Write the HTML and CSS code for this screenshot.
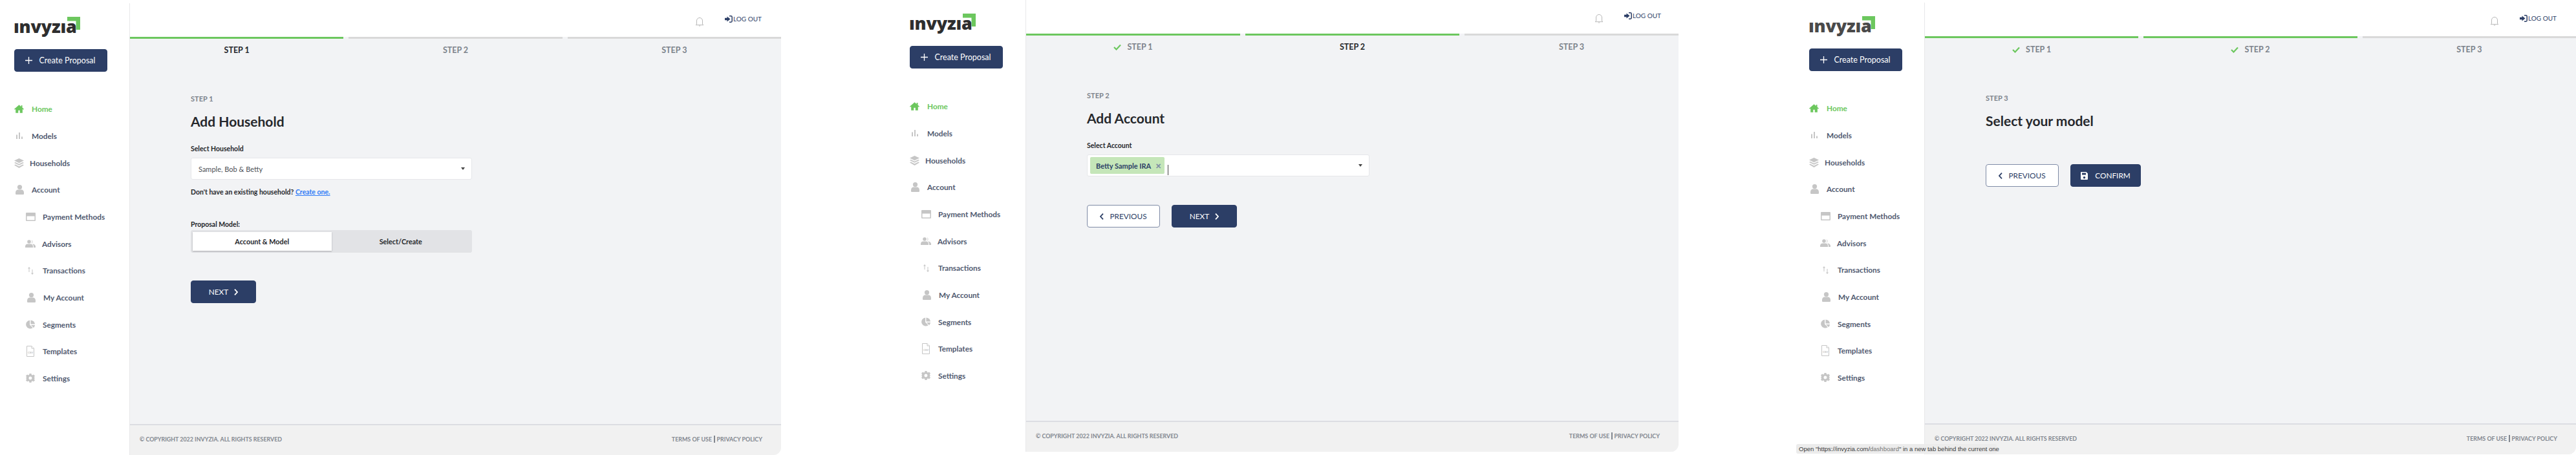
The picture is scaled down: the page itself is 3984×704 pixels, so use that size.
FILE: index.html
```html
<!DOCTYPE html>
<html lang="en">
<head>
<meta charset="utf-8">
<title>Invyzia - Create Proposal</title>
<link rel="stylesheet" href="styles.css">
</head>
<body>
<svg class="sprite" aria-hidden="true">
  <symbol id="i-home" viewBox="0 0 24 20"><path d="M12 0 0 10.2l1.5 1.7L3.500 10.200V20h6.500v-6.500h4V20h6.500v-9.800l2 1.700 1.500-1.700-4-3.400V1h-3v3.200z"/></symbol>
  <symbol id="i-bars" viewBox="0 0 10 10"><rect x="0" y="3.500" width="2" height="6.500"/><rect x="4" y="0" width="2" height="10"/><rect x="8" y="6.500" width="2" height="3.500"/></symbol>
  <symbol id="i-layers" viewBox="0 0 15 15"><path d="M7.500 0 15 3.600 7.500 7.200 0 3.600z"/><path d="M1.800 6 0 6.900l7.500 3.900L15 6.900 13.200 6 7.500 8.800z"/><path d="M1.800 9.600 0 10.500 7.500 15 15 10.500l-1.800-.9-5.700 2.900z"/></symbol>
  <symbol id="i-user" viewBox="0 0 13 15"><circle cx="6.500" cy="3.600" r="3.600"/><path d="M0 12c0-3 2-4.500 3.500-4.500h6C11 7.500 13 9 13 12v1.500c0 1-.6 1.500-1.500 1.500h-10C.6 15 0 14.500 0 13.500z"/></symbol>
  <symbol id="i-card" viewBox="0 0 15 13"><path fill-rule="evenodd" d="M1 0h13a1 1 0 0 1 1 1v11a1 1 0 0 1-1 1H1a1 1 0 0 1-1-1V1a1 1 0 0 1 1-1zm.5 5.500v6h12v-6z"/></symbol>
  <symbol id="i-users" viewBox="0 0 16 12"><circle cx="6" cy="3" r="2.800"/><path d="M0 10.500C0 8 1.700 6.500 3.500 6.500h5C10.300 6.500 12 8 12 10.500V12H0z"/><path d="M9.500.3a2.800 2.800 0 0 1 0 5.400 4 4 0 0 0 0-5.400zM11 6.500c2.500 0 5 1.500 5 4V12h-3v-1.500c0-1.500-.7-3-2-4z"/></symbol>
  <symbol id="i-arrows" viewBox="0 0 9 12"><path d="M2 0 0 2.500h1.500V8h1V2.500H4zM7 12l2-2.500H7.500V4h-1v5.500H5z"/></symbol>
  <symbol id="i-pie" viewBox="0 0 15 14"><path d="M6.500 0v7.500l5 5A7 7 0 1 1 6.500 0z"/><path d="M8 0a7 7 0 0 1 7 6.500H8z"/><path d="M8.500 8H15a7 7 0 0 1-2 4.500z"/></symbol>
  <symbol id="i-gear" viewBox="0 0 14 14"><path fill-rule="evenodd" d="M5.500 0h3l.4 1.900 1.300.6L11.900 1.500 14 3.600l-1.100 1.700.5 1.200L14 7v0l-.6.5-.5 1.200 1.100 1.700-2.100 2.100-1.700-1-1.300.6L8.500 14h-3l-.4-1.900-1.300-.6-1.700 1L0 10.400l1.100-1.700-.5-1.200L0 7v0l.6-.5.5-1.200L0 3.600l2.100-2.100 1.700 1 1.300-.6zM7 4.500a2.500 2.500 0 1 0 0 5 2.500 2.500 0 0 0 0-5z"/></symbol>
  <symbol id="i-bell" viewBox="0 0 14 15"><path fill="none" stroke="currentColor" stroke-width="1" d="M2.500 11.500V6a4.500 4.500 0 0 1 9 0v5.500l1.500 1.200H1z"/><path d="M5.500 13.500h3L7 15z"/></symbol>
  <symbol id="i-logout" viewBox="0 0 12 11"><path d="M0 3.800h3.500V1.500L8.500 5.500l-5 4V7.200H0z"/><path fill="none" stroke="currentColor" stroke-width="1.500" d="M7 .8h2.500c1 0 1.700.7 1.700 1.700v6c0 1-.7 1.700-1.700 1.700H7"/></symbol>
  <symbol id="i-check" viewBox="0 0 12 10"><path fill="none" stroke="currentColor" stroke-width="2.200" d="m1 5 3.500 3.500L11 1.500"/></symbol>
  <symbol id="i-save" viewBox="0 0 11 12"><path fill-rule="evenodd" d="M1 0h7.500L11 2.500V11a1 1 0 0 1-1 1H1a1 1 0 0 1-1-1V1a1 1 0 0 1 1-1zm1 1.500v3h6v-3zM5.500 7a1.800 1.800 0 1 0 0 3.600 1.800 1.800 0 0 0 0-3.600z"/></symbol>
  <symbol id="i-plus" viewBox="0 0 11 11"><path fill="none" stroke="currentColor" stroke-width="1.300" d="M5.500 0v11M0 5.500h11"/></symbol>
  <symbol id="i-next" viewBox="0 0 6 10"><path fill="none" stroke="currentColor" stroke-width="1.800" d="m1 .6 4 4.400-4 4.400"/></symbol>
  <symbol id="i-prev" viewBox="0 0 6 10"><path fill="none" stroke="currentColor" stroke-width="1.800" d="M5 .6 1 5l4 4.400"/></symbol>
  <symbol id="i-corner" viewBox="0 0 20 20"><path d="M0 0h20v20h-6.500V6.500H0z"/></symbol>
</svg>

<div class="frame frame-one">
  <aside class="sidebar">
    <div class="logo" aria-label="invyzia">ınvyzıa<svg class="logo-corner"><use href="#i-corner"/></svg></div>
    <a class="btn btn-primary btn-create"><svg class="ic-plus"><use href="#i-plus"/></svg>Create Proposal</a>
    <nav class="nav">
      <a class="nav-item is-active"><svg class="ic ic-home"><use href="#i-home"/></svg>Home</a>
      <a class="nav-item"><svg class="ic ic-bars"><use href="#i-bars"/></svg>Models</a>
      <a class="nav-item nav-wide"><svg class="ic ic-layers"><use href="#i-layers"/></svg>Households</a>
      <a class="nav-item"><svg class="ic ic-user"><use href="#i-user"/></svg>Account</a>
      <a class="nav-item nav-sub"><svg class="ic ic-card"><use href="#i-card"/></svg>Payment Methods</a>
      <a class="nav-item nav-sub"><svg class="ic ic-users"><use href="#i-users"/></svg>Advisors</a>
      <a class="nav-item nav-sub"><svg class="ic ic-arrows"><use href="#i-arrows"/></svg>Transactions</a>
      <a class="nav-item nav-sub"><svg class="ic ic-user"><use href="#i-user"/></svg>My Account</a>
      <a class="nav-item nav-sub"><svg class="ic ic-pie"><use href="#i-pie"/></svg>Segments</a>
      <a class="nav-item nav-sub"><svg class="ic ic-csv" viewBox="0 0 12 17"><path class="csv-page" d="M.5.500h7.500l3.500 3.500v12.500H.5z"/><path class="csv-page" d="M8 .5V4h3.500"/><text class="csv-text" x="6" y="12">CSV</text></svg>Templates</a>
      <a class="nav-item nav-sub"><svg class="ic ic-gear"><use href="#i-gear"/></svg>Settings</a>
    </nav>
  </aside>
  <main class="main">
    <header class="topbar">
      <svg class="ic-bell"><use href="#i-bell"/></svg>
      <a class="logout"><svg class="ic-logout"><use href="#i-logout"/></svg>LOG OUT</a>
    </header>
    <div class="stepper">
      <div class="step is-done is-current">STEP 1</div>
      <div class="step">STEP 2</div>
      <div class="step">STEP 3</div>
    </div>
    <section class="body">
      <div class="eyebrow">STEP 1</div>
      <h1 class="title">Add Household</h1>
      <label class="field-label">Select Household</label>
      <div class="select"><span class="select-value">Sample, Bob &amp; Betty</span><span class="select-arrow"></span></div>
      <p class="helper">Don't have an existing household? <a class="link">Create one.</a></p>
      <label class="field-label model-label">Proposal Model:</label>
      <div class="toggle">
        <span class="toggle-opt is-on">Account &amp; Model</span>
        <span class="toggle-opt">Select/Create</span>
      </div>
      <div class="actions actions-one">
        <a class="btn btn-primary btn-next">NEXT<svg class="ic-chev"><use href="#i-next"/></svg></a>
      </div>
    </section>
    <footer class="footer">
      <span>© COPYRIGHT 2022 INVYZIA. ALL RIGHTS RESERVED</span>
      <span class="footer-links"><a>TERMS OF USE</a><i class="footer-sep"></i><a>PRIVACY POLICY</a></span>
    </footer>
  </main>
</div>

<div class="frame frame-two">
  <aside class="sidebar">
    <div class="logo" aria-label="invyzia">ınvyzıa<svg class="logo-corner"><use href="#i-corner"/></svg></div>
    <a class="btn btn-primary btn-create"><svg class="ic-plus"><use href="#i-plus"/></svg>Create Proposal</a>
    <nav class="nav">
      <a class="nav-item is-active"><svg class="ic ic-home"><use href="#i-home"/></svg>Home</a>
      <a class="nav-item"><svg class="ic ic-bars"><use href="#i-bars"/></svg>Models</a>
      <a class="nav-item nav-wide"><svg class="ic ic-layers"><use href="#i-layers"/></svg>Households</a>
      <a class="nav-item"><svg class="ic ic-user"><use href="#i-user"/></svg>Account</a>
      <a class="nav-item nav-sub"><svg class="ic ic-card"><use href="#i-card"/></svg>Payment Methods</a>
      <a class="nav-item nav-sub"><svg class="ic ic-users"><use href="#i-users"/></svg>Advisors</a>
      <a class="nav-item nav-sub"><svg class="ic ic-arrows"><use href="#i-arrows"/></svg>Transactions</a>
      <a class="nav-item nav-sub"><svg class="ic ic-user"><use href="#i-user"/></svg>My Account</a>
      <a class="nav-item nav-sub"><svg class="ic ic-pie"><use href="#i-pie"/></svg>Segments</a>
      <a class="nav-item nav-sub"><svg class="ic ic-csv" viewBox="0 0 12 17"><path class="csv-page" d="M.5.500h7.500l3.500 3.500v12.500H.5z"/><path class="csv-page" d="M8 .5V4h3.500"/><text class="csv-text" x="6" y="12">CSV</text></svg>Templates</a>
      <a class="nav-item nav-sub"><svg class="ic ic-gear"><use href="#i-gear"/></svg>Settings</a>
    </nav>
  </aside>
  <main class="main">
    <header class="topbar">
      <svg class="ic-bell"><use href="#i-bell"/></svg>
      <a class="logout"><svg class="ic-logout"><use href="#i-logout"/></svg>LOG OUT</a>
    </header>
    <div class="stepper">
      <div class="step is-done"><svg class="ic-check"><use href="#i-check"/></svg>STEP 1</div>
      <div class="step is-done is-current">STEP 2</div>
      <div class="step">STEP 3</div>
    </div>
    <section class="body">
      <div class="eyebrow">STEP 2</div>
      <h1 class="title">Add Account</h1>
      <label class="field-label">Select Account</label>
      <div class="select select-multi">
        <span class="chip">Betty Sample IRA<span class="chip-x">×</span></span>
        <span class="caret"></span>
        <span class="select-arrow"></span>
      </div>
      <div class="actions">
        <a class="btn btn-outline btn-prev"><svg class="ic-chev"><use href="#i-prev"/></svg>PREVIOUS</a>
        <a class="btn btn-primary btn-next">NEXT<svg class="ic-chev"><use href="#i-next"/></svg></a>
      </div>
    </section>
    <footer class="footer">
      <span>© COPYRIGHT 2022 INVYZIA. ALL RIGHTS RESERVED</span>
      <span class="footer-links"><a>TERMS OF USE</a><i class="footer-sep"></i><a>PRIVACY POLICY</a></span>
    </footer>
  </main>
</div>

<div class="frame frame-three">
  <aside class="sidebar">
    <div class="logo" aria-label="invyzia">ınvyzıa<svg class="logo-corner"><use href="#i-corner"/></svg></div>
    <a class="btn btn-primary btn-create"><svg class="ic-plus"><use href="#i-plus"/></svg>Create Proposal</a>
    <nav class="nav">
      <a class="nav-item is-active"><svg class="ic ic-home"><use href="#i-home"/></svg>Home</a>
      <a class="nav-item"><svg class="ic ic-bars"><use href="#i-bars"/></svg>Models</a>
      <a class="nav-item nav-wide"><svg class="ic ic-layers"><use href="#i-layers"/></svg>Households</a>
      <a class="nav-item"><svg class="ic ic-user"><use href="#i-user"/></svg>Account</a>
      <a class="nav-item nav-sub"><svg class="ic ic-card"><use href="#i-card"/></svg>Payment Methods</a>
      <a class="nav-item nav-sub"><svg class="ic ic-users"><use href="#i-users"/></svg>Advisors</a>
      <a class="nav-item nav-sub"><svg class="ic ic-arrows"><use href="#i-arrows"/></svg>Transactions</a>
      <a class="nav-item nav-sub"><svg class="ic ic-user"><use href="#i-user"/></svg>My Account</a>
      <a class="nav-item nav-sub"><svg class="ic ic-pie"><use href="#i-pie"/></svg>Segments</a>
      <a class="nav-item nav-sub"><svg class="ic ic-csv" viewBox="0 0 12 17"><path class="csv-page" d="M.5.500h7.500l3.500 3.500v12.500H.5z"/><path class="csv-page" d="M8 .5V4h3.500"/><text class="csv-text" x="6" y="12">CSV</text></svg>Templates</a>
      <a class="nav-item nav-sub"><svg class="ic ic-gear"><use href="#i-gear"/></svg>Settings</a>
    </nav>
  </aside>
  <main class="main">
    <header class="topbar">
      <svg class="ic-bell"><use href="#i-bell"/></svg>
      <a class="logout"><svg class="ic-logout"><use href="#i-logout"/></svg>LOG OUT</a>
    </header>
    <div class="stepper">
      <div class="step is-done"><svg class="ic-check"><use href="#i-check"/></svg>STEP 1</div>
      <div class="step is-done"><svg class="ic-check"><use href="#i-check"/></svg>STEP 2</div>
      <div class="step">STEP 3</div>
    </div>
    <section class="body">
      <div class="eyebrow">STEP 3</div>
      <h1 class="title">Select your model</h1>
      <div class="actions actions-three">
        <a class="btn btn-outline btn-prev"><svg class="ic-chev"><use href="#i-prev"/></svg>PREVIOUS</a>
        <a class="btn btn-primary btn-confirm"><svg class="ic-save"><use href="#i-save"/></svg>CONFIRM</a>
      </div>
    </section>
    <footer class="footer">
      <span>© COPYRIGHT 2022 INVYZIA. ALL RIGHTS RESERVED</span>
      <span class="footer-links"><a>TERMS OF USE</a><i class="footer-sep"></i><a>PRIVACY POLICY</a></span>
    </footer>
  </main>
  <div class="status-tip">Open "https://invyzia.com/<span class="status-dim">dashboard</span>" in a new tab behind the current one</div>
</div>
</body>
</html>
```
FILE: styles.css
```css
* { box-sizing: border-box; }
html, body { margin: 0; padding: 0; background: #fff; }
body {
  display: flex;
  align-items: flex-start;
  width: 3984px;
  height: 704px;
  overflow: hidden;
  font-family: "Lato", "Noto Sans", sans-serif;
  color: #26282c;
}
.sprite { display: none; }

.frame { display: flex; position: relative; height: 699px; flex: none; }
.frame-one { width: 1208px; margin-top: 5px; }
.frame-two { width: 1211px; margin-left: 177px; }
.frame-three { width: 1208px; margin-left: 180px; margin-top: 4px; }

/* Sidebar */
.sidebar { width: 201px; flex: none; border-right: 1px solid #e8e8ea; background: #fff; }
.frame-two .sidebar { width: 202px; }
.logo {
  position: relative;
  height: 71px;
  margin-left: 21px;
  padding-top: 19px;
  font-family: "Open Sans", sans-serif;
  font-weight: 800;
  font-size: 27px;
  line-height: 34px;
  letter-spacing: -0.2px;
  color: #2e2e2e;
}
.frame-three .logo { color: #4a4a4a; }
.logo-corner { position: absolute; left: 83px; top: 21px; width: 20px; height: 20px; fill: #6cc75e; }

.btn {
  display: flex;
  align-items: center;
  justify-content: center;
  height: 35px;
  border-radius: 4px;
  font-size: 11.800px;
}
.btn-primary { background: #2c3e66; color: #fff; border: 1px solid #2c3e66; }
.btn-outline { background: #fff; color: #2c3e66; border: 1px solid #7f8ba6; }
.btn-create { width: 144px; margin-left: 21.500px; gap: 10px; font-size: 12.500px; }
.ic-plus { width: 11px; height: 11px; color: #fff; }

.nav { margin-top: 37px; }
.frame-two .nav { margin-top: 38px; }
.nav-item {
  display: flex;
  align-items: center;
  height: 41.670px;
  padding-left: 22px;
  font-size: 11.800px;
  font-weight: 700;
  color: #515a70;
}
.nav-item.is-active { color: #6cc75e; }
.nav-sub { padding-left: 40px; }
.ic { fill: #c6c6c6; flex: none; margin-right: 12px; }
.is-active .ic { fill: #6cc75e; }
.ic-home { width: 15px; height: 13px; }
.ic-bars { width: 10px; height: 10px; margin-left: 3px; margin-right: 14px; }
.ic-layers { width: 15px; height: 15px; margin-right: 9px; }
.ic-user { width: 13px; height: 15px; margin-left: 2px; margin-right: 12px; }
.ic-card { width: 15px; height: 13px; margin-right: 11px; }
.ic-users { width: 16px; height: 12px; margin-left: -1px; margin-right: 10px; }
.ic-arrows { width: 9px; height: 12px; margin-left: 3px; margin-right: 14px; }
.ic-pie { width: 14px; height: 14px; margin-right: 12px; }
.ic-csv { width: 12px; height: 17px; margin-left: 1px; margin-right: 13px; }
.ic-gear { width: 14px; height: 14px; margin-right: 12px; }
.csv-page { fill: #fff; stroke: #c6c6c6; stroke-width: 1; }
.csv-text { font-size: 4px; fill: #c0c0c0; text-anchor: middle; font-family: "Liberation Sans", sans-serif; }

/* Main */
.main { flex: 1; display: flex; flex-direction: column; min-width: 0; background: #f2f3f5; border-bottom-right-radius: 12px; overflow: hidden; }
.topbar {
  flex: none;
  height: 52px;
  background: #fff;
  display: flex;
  align-items: center;
  justify-content: flex-end;
  gap: 32px;
  padding-right: 30px;
}
.frame-two .topbar { padding-right: 27px; }
.ic-bell { width: 14px; height: 15px; color: #b9b9b9; fill: #b9b9b9; margin-top: 4px; }
.logout { display: flex; align-items: center; gap: 1px; font-size: 10px; color: #2c3e66; margin-bottom: 4px; }
.ic-logout { width: 12px; height: 11px; fill: #2c3e66; color: #2c3e66; }

.stepper { flex: none; display: grid; grid-template-columns: 1fr 1fr 1fr; column-gap: 8px; }
.step {
  display: flex;
  align-items: center;
  justify-content: center;
  gap: 9px;
  height: 29px;
  padding-top: 9px;
  border-top: 3px solid #d9d9d9;
  font-size: 12.500px;
  font-weight: 700;
  color: #7d838c;
}
.step.is-done { border-top-color: #6cc75e; }
.step.is-current { color: #26282c; }
.ic-check { width: 12px; height: 10px; color: #6cc75e; }

.body { flex: 1; padding: 59px 0 0 94px; }
.eyebrow { font-size: 11px; line-height: 16px; color: #7d838c; font-weight: 700; }
.title { margin: 12px 0 0; font-size: 21px; line-height: 30px; font-weight: 700; color: #26282c; }
.field-label { display: block; margin-top: 20px; font-size: 10.500px; line-height: 14px; font-weight: 700; color: #26282c; }
.select {
  display: flex;
  align-items: center;
  width: 435px;
  height: 34px;
  margin-top: 7px;
  padding: 0 10px 0 11px;
  background: #fff;
  border: 1px solid #e6e7ea;
  border-radius: 3px;
}
.select-value { font-size: 11px; color: #4d5157; }
.select-arrow { margin-left: auto; width: 0; height: 0; border-left: 3px solid transparent; border-right: 3px solid transparent; border-top: 4px solid #444; }
.select-multi { width: 437px; padding-left: 4px; }
.chip {
  display: flex;
  align-items: center;
  justify-content: space-between;
  width: 115px;
  height: 26px;
  padding: 0 5px 0 9px;
  border-radius: 2px;
  background: #c5e6b9;
  color: #2c3e66;
  font-size: 11px;
  font-weight: 700;
}
.chip-x { font-size: 15px; line-height: 15px; color: #7d8ba3; font-weight: 900; }
.caret { align-self: flex-end; width: 1px; height: 16px; margin: 0 0 1px 5px; background: #444; }
.helper { margin: 12px 0 0; font-size: 10.500px; line-height: 14px; font-weight: 700; color: #26282c; }
.link { color: #2f7bf6; text-decoration: underline; }
.model-label { margin-top: 36px; margin-bottom: 2px; }
.toggle {
  display: grid;
  grid-template-columns: 1fr 1fr;
  width: 435px;
  height: 35px;
  padding: 3px;
  background: #e2e3e6;
  border-radius: 3px;
}
.toggle-opt { display: flex; align-items: center; justify-content: center; font-size: 10.800px; font-weight: 700; color: #26282c; padding-bottom: 1px; }
.toggle-opt.is-on { background: #fff; box-shadow: 0 1px 2px rgba(0, 0, 0, 0.25); }

.actions { display: flex; gap: 18px; margin-top: 44px; }
.actions-one { margin-top: 43px; }
.actions-three { margin-top: 52px; }
.btn-next { width: 101px; gap: 9px; }
.btn-prev { width: 113px; gap: 9px; }
.btn-confirm { width: 109px; gap: 11px; }
.ic-chev { width: 6px; height: 10px; }
.btn-primary .ic-chev { color: #fff; }
.btn-outline .ic-chev { color: #2c3e66; }
.ic-save { width: 11px; height: 12px; fill: #fff; }

.footer {
  flex: none;
  height: 48px;
  display: flex;
  align-items: center;
  justify-content: space-between;
  padding: 0 29px 4px 15px;
  background: #f1f1f1;
  border-top: 2px solid #dcdde2;
  font-size: 8.900px;
  font-weight: 700;
  color: #82878f;
}
.footer-links { display: flex; align-items: center; gap: 3px; }
.footer-sep { display: block; width: 1.500px; height: 11px; background: #82878f; }

/* Browser status tooltip overlay */
.status-tip {
  position: absolute;
  left: 2px;
  bottom: 1px;
  width: 310px;
  height: 15px;
  padding-left: 4px;
  border-radius: 3px;
  background: #ececec;
  font-family: "Liberation Sans", sans-serif;
  font-size: 9.500px;
  line-height: 15px;
  color: #3a3a3a;
  white-space: nowrap;
}
.status-dim { color: #777; }
```
